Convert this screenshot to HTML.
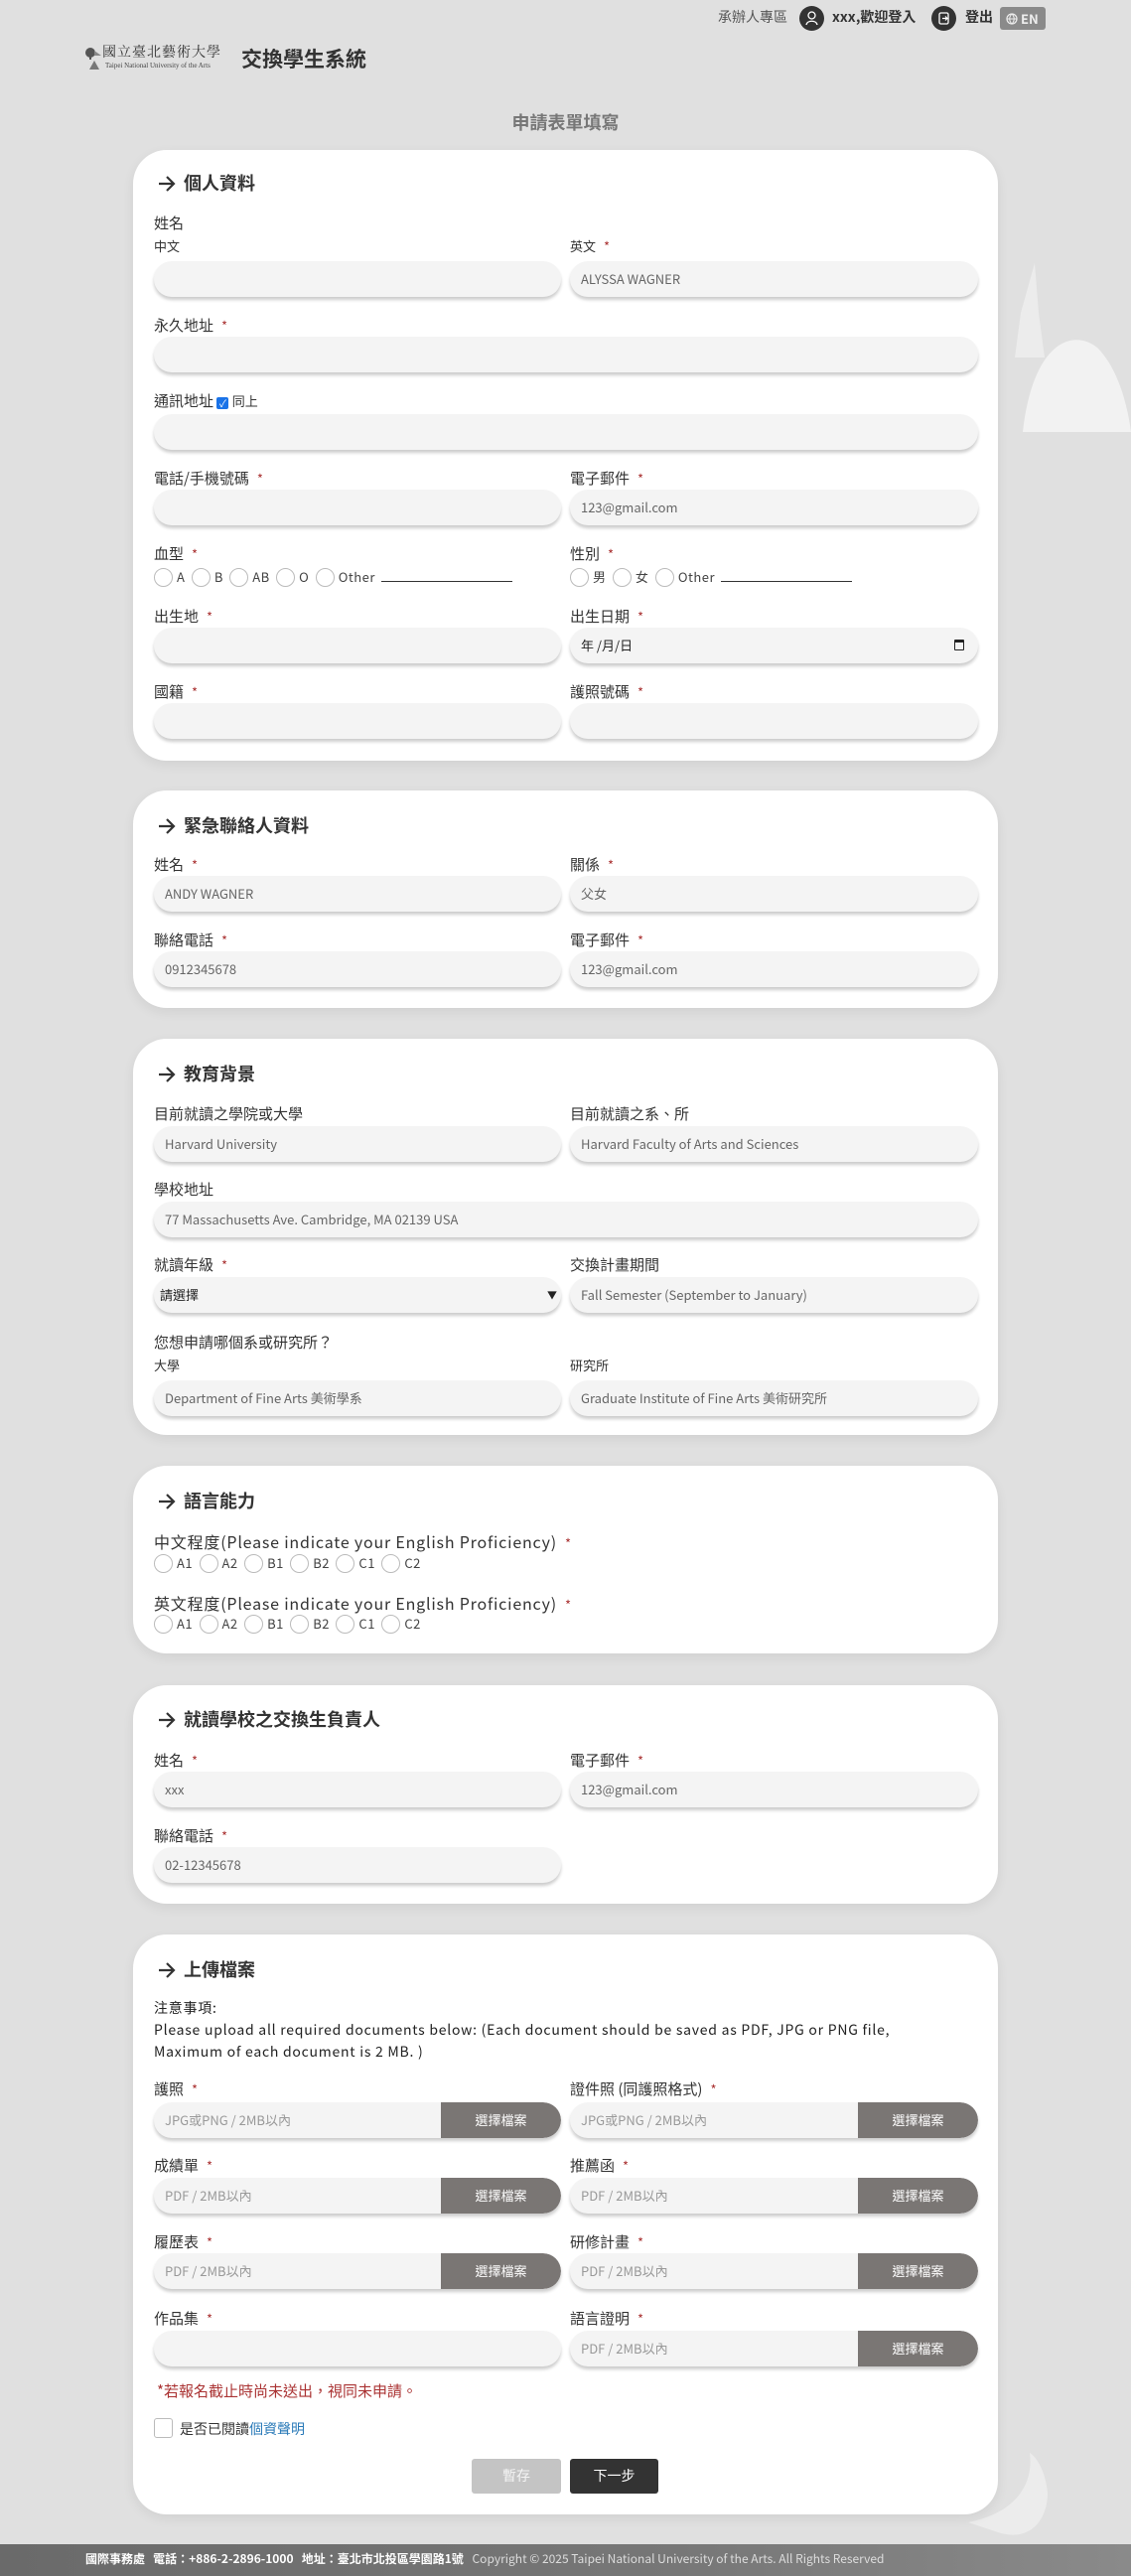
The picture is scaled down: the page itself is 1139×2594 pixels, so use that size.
<!DOCTYPE html>
<html><head><meta charset="utf-8">
<style>
*{box-sizing:border-box;margin:0;padding:0}
body{width:1139px;height:2594px;background:#e0e0e0;font-family:"Noto Sans CJK TC","Liberation Sans",sans-serif;color:#333;position:relative;overflow:hidden}
.a{position:absolute}
.card{position:absolute;left:134px;width:871px;background:#fff;border-radius:34px;box-shadow:0 4px 12px rgba(0,0,0,.07)}
.l{position:absolute;font-size:15px;line-height:20px;color:#333;white-space:nowrap}
.s{position:absolute;font-size:13px;line-height:18px;color:#333;white-space:nowrap}
.r{color:#a33;margin-left:8px;font-size:13px}
.in{position:absolute;height:36px;border-radius:18px;background:#f4f4f4;box-shadow:0 3px 3px rgba(0,0,0,.2);font-size:13px;line-height:36px;padding-left:11px;color:#666;white-space:nowrap;overflow:hidden}
.L{left:155px;width:410px}.R{left:574px;width:411px}.F{left:155px;width:830px}
.h{position:absolute;left:159px;font-size:18px;font-weight:bold;line-height:24px;color:#333;white-space:nowrap}
.h svg{vertical-align:-2px;margin-right:8px}
.btn{position:absolute;right:0;top:0;width:121px;height:36px;background:#7a7674;color:#fff;text-align:center;font-size:13px;border-radius:0 18px 18px 0}
.rad{position:absolute;font-size:13px;line-height:20px;color:#444;white-space:nowrap;letter-spacing:.5px}
.rad i{display:inline-block;width:19px;height:19px;border:1px solid #bbb;border-radius:50%;vertical-align:-5px;margin-right:4px;margin-left:3px}
.rad i:first-child{margin-left:0}
.line{display:inline-block;width:132px;border-bottom:1px solid #333;margin-left:6px;height:14px}
</style></head><body>

<!-- decorations -->
<svg class="a" style="left:1010px;top:265px" width="129" height="175"><path d="M32 0 L36 50 L42 95 L12 95 L18 50 Z" fill="#ececec"/><path d="M20 170 C30 80 70 65 95 85 C115 105 125 140 129 170 Z" fill="#f2f2f2"/></svg>
<svg class="a" style="left:975px;top:2470px" width="100" height="90"><path d="M30 80 C60 90 80 70 80 40 C78 20 70 5 62 0 C66 30 50 60 0 70 Z" fill="#ececec"/></svg>

<!-- top bar -->
<div class="a" style="left:723px;top:7px;font-size:14px;line-height:20px;color:#555">承辦人專區</div>
<div class="a" style="left:805px;top:6px;width:25px;height:25px;border-radius:50%;background:#333"><svg width="25" height="25"><circle cx="12.5" cy="9.5" r="3.5" fill="none" stroke="#fff" stroke-width="1.3"/><path d="M7 19 C8 14 17 14 18 19" fill="none" stroke="#fff" stroke-width="1.3"/></svg></div>
<div class="a" style="left:838px;top:7px;font-size:14px;line-height:20px;font-weight:bold;color:#333">xxx,歡迎登入</div>
<div class="a" style="left:938px;top:6px;width:25px;height:25px;border-radius:50%;background:#333"><svg width="25" height="25"><rect x="8" y="7" width="9" height="11" rx="1.5" fill="none" stroke="#fff" stroke-width="1.3"/><path d="M11 12.5 H16 M14 10.5 L16 12.5 L14 14.5" fill="none" stroke="#fff" stroke-width="1.2"/></svg></div>
<div class="a" style="left:972px;top:7px;font-size:14px;line-height:20px;font-weight:bold;color:#333">登出</div>
<div class="a" style="left:1007px;top:7px;width:46px;height:23px;background:#8a8a8a;border-radius:3px;color:#eee;font-size:13px;line-height:23px;font-weight:bold;padding-left:6px"><svg width="12" height="12" style="vertical-align:-1px"><circle cx="6" cy="6" r="5" fill="none" stroke="#eee" stroke-width="1.2"/><path d="M1 6H11M6 1C3 4 3 8 6 11M6 1C9 4 9 8 6 11" fill="none" stroke="#eee" stroke-width="1"/></svg> EN</div>

<!-- logo -->
<svg class="a" style="left:85px;top:47px" width="18" height="24"><circle cx="6" cy="6" r="5" fill="#555"/><path d="M6 10V13" stroke="#555" stroke-width="2"/><path d="M10 4 L17 9 L10 9Z" fill="#888"/><path d="M5 23 L10 14 L15 23Z" fill="#777"/></svg>
<div class="a" style="left:103px;top:44px;font-family:'Noto Serif CJK SC',serif;font-size:14px;line-height:16px;color:#333;letter-spacing:1px">國立臺北藝術大學</div>
<div class="a" style="left:106px;top:62px;font-family:'Liberation Serif',serif;font-size:7px;line-height:9px;color:#444">Taipei National University of the Arts</div>
<div class="a" style="left:243px;top:44px;font-size:21px;line-height:30px;font-weight:bold;color:#333">交換學生系統</div>

<div class="a" style="left:0;width:1139px;top:110px;text-align:center;font-size:18px;line-height:26px;font-weight:bold;color:#777">申請表單填寫</div>

<!-- card 1 -->
<div class="card" style="top:151px;height:615px"></div>
<div class="h" style="top:172px"><svg width="18" height="16"><path d="M1 8H16M9 1L16 8L9 15" fill="none" stroke="#333" stroke-width="2.2"/></svg>個人資料</div>
<div class="l" style="left:155px;top:215px">姓名</div>
<div class="s" style="left:155px;top:239px">中文</div>
<div class="s" style="left:574px;top:239px">英文<span class="r">*</span></div>
<div class="in L" style="top:263px"></div>
<div class="in R" style="top:263px">ALYSSA WAGNER</div>
<div class="l" style="left:155px;top:318px">永久地址<span class="r">*</span></div>
<div class="in F" style="top:339px"></div>
<div class="l" style="left:155px;top:394px">通訊地址 <span style="display:inline-block;width:12px;height:12px;background:#1a73e8;border-radius:2px;vertical-align:-1px;color:#fff;font-size:10px;line-height:12px;text-align:center">✓</span> <span style="font-size:13px">同上</span></div>
<div class="in F" style="top:417px"></div>
<div class="l" style="left:155px;top:472px">電話/手機號碼<span class="r">*</span></div>
<div class="l" style="left:574px;top:472px">電子郵件<span class="r">*</span></div>
<div class="in L" style="top:493px"></div>
<div class="in R" style="top:493px">123@gmail.com</div>
<div class="l" style="left:155px;top:548px">血型<span class="r">*</span></div>
<div class="l" style="left:574px;top:548px">性別<span class="r">*</span></div>
<div class="rad" style="left:155px;top:571px"><i></i>A <i></i>B <i></i>AB <i></i>O <i></i>Other<span class="line"></span></div>
<div class="rad" style="left:574px;top:571px"><i></i>男 <i></i>女 <i></i>Other<span class="line"></span></div>
<div class="l" style="left:155px;top:611px">出生地<span class="r">*</span></div>
<div class="l" style="left:574px;top:611px">出生日期<span class="r">*</span></div>
<div class="in L" style="top:632px"></div>
<div class="in R" style="top:632px;color:#222">年 /月/日<span style="position:absolute;right:14px;top:12px;width:10px;height:11px;border:1.5px solid #222;border-top-width:3px;border-radius:1px"></span></div>
<div class="l" style="left:155px;top:687px">國籍<span class="r">*</span></div>
<div class="l" style="left:574px;top:687px">護照號碼<span class="r">*</span></div>
<div class="in L" style="top:708px"></div>
<div class="in R" style="top:708px"></div>

<!-- card 2 -->
<div class="card" style="top:796px;height:219px"></div>
<div class="h" style="top:819px"><svg width="18" height="16"><path d="M1 8H16M9 1L16 8L9 15" fill="none" stroke="#333" stroke-width="2.2"/></svg>緊急聯絡人資料</div>
<div class="l" style="left:155px;top:861px">姓名<span class="r">*</span></div>
<div class="l" style="left:574px;top:861px">關係<span class="r">*</span></div>
<div class="in L" style="top:882px">ANDY WAGNER</div>
<div class="in R" style="top:882px">父女</div>
<div class="l" style="left:155px;top:937px">聯絡電話<span class="r">*</span></div>
<div class="l" style="left:574px;top:937px">電子郵件<span class="r">*</span></div>
<div class="in L" style="top:958px">0912345678</div>
<div class="in R" style="top:958px">123@gmail.com</div>

<!-- card 3 -->
<div class="card" style="top:1046px;height:399px"></div>
<div class="h" style="top:1069px"><svg width="18" height="16"><path d="M1 8H16M9 1L16 8L9 15" fill="none" stroke="#333" stroke-width="2.2"/></svg>教育背景</div>
<div class="l" style="left:155px;top:1112px">目前就讀之學院或大學</div>
<div class="l" style="left:574px;top:1112px">目前就讀之系、所</div>
<div class="in L" style="top:1134px">Harvard University</div>
<div class="in R" style="top:1134px">Harvard Faculty of Arts and Sciences</div>
<div class="l" style="left:155px;top:1188px">學校地址</div>
<div class="in F" style="top:1210px">77 Massachusetts Ave. Cambridge, MA 02139 USA</div>
<div class="l" style="left:155px;top:1264px">就讀年級<span class="r">*</span></div>
<div class="l" style="left:574px;top:1264px">交換計畫期間</div>
<div class="in L" style="top:1286px;color:#222;padding-left:6px">請選擇<span style="position:absolute;right:4px;font-size:10px">▼</span></div>
<div class="in R" style="top:1286px">Fall Semester (September to January)</div>
<div class="l" style="left:155px;top:1342px">您想申請哪個系或研究所？</div>
<div class="s" style="left:155px;top:1366px">大學</div>
<div class="s" style="left:574px;top:1366px">研究所</div>
<div class="in L" style="top:1390px">Department of Fine Arts 美術學系</div>
<div class="in R" style="top:1390px">Graduate Institute of Fine Arts 美術研究所</div>

<!-- card 4 -->
<div class="card" style="top:1476px;height:189px"></div>
<div class="h" style="top:1499px"><svg width="18" height="16"><path d="M1 8H16M9 1L16 8L9 15" fill="none" stroke="#333" stroke-width="2.2"/></svg>語言能力</div>
<div class="l" style="left:155px;top:1542px;font-size:16px;letter-spacing:.8px">中文程度(Please indicate your English Proficiency)<span class="r">*</span></div>
<div class="rad" style="left:155px;top:1564px"><i></i>A1 <i></i>A2 <i></i>B1 <i></i>B2 <i></i>C1 <i></i>C2</div>
<div class="l" style="left:155px;top:1604px;font-size:16px;letter-spacing:.8px">英文程度(Please indicate your English Proficiency)<span class="r">*</span></div>
<div class="rad" style="left:155px;top:1625px"><i></i>A1 <i></i>A2 <i></i>B1 <i></i>B2 <i></i>C1 <i></i>C2</div>

<!-- card 5 -->
<div class="card" style="top:1697px;height:220px"></div>
<div class="h" style="top:1719px"><svg width="18" height="16"><path d="M1 8H16M9 1L16 8L9 15" fill="none" stroke="#333" stroke-width="2.2"/></svg>就讀學校之交換生負責人</div>
<div class="l" style="left:155px;top:1763px">姓名<span class="r">*</span></div>
<div class="l" style="left:574px;top:1763px">電子郵件<span class="r">*</span></div>
<div class="in L" style="top:1784px">xxx</div>
<div class="in R" style="top:1784px">123@gmail.com</div>
<div class="l" style="left:155px;top:1839px">聯絡電話<span class="r">*</span></div>
<div class="in L" style="top:1860px">02-12345678</div>

<!-- card 6 -->
<div class="card" style="top:1948px;height:584px"></div>
<div class="h" style="top:1971px"><svg width="18" height="16"><path d="M1 8H16M9 1L16 8L9 15" fill="none" stroke="#333" stroke-width="2.2"/></svg>上傳檔案</div>
<div class="a" style="left:155px;top:2011px;font-size:14px;line-height:22px;color:#222;letter-spacing:.75px">注意事項:<br>Please upload all required documents below: (Each document should be saved as PDF, JPG or PNG file,<br>Maximum of each document is 2 MB. )</div>
<div class="l" style="left:155px;top:2094px">護照<span class="r">*</span></div>
<div class="l" style="left:574px;top:2094px">證件照 (同護照格式)<span class="r">*</span></div>
<div class="in L" style="top:2117px;color:#999">JPG或PNG / 2MB以內<div class="btn">選擇檔案</div></div>
<div class="in R" style="top:2117px;color:#999">JPG或PNG / 2MB以內<div class="btn">選擇檔案</div></div>
<div class="l" style="left:155px;top:2171px">成績單<span class="r">*</span></div>
<div class="l" style="left:574px;top:2171px">推薦函<span class="r">*</span></div>
<div class="in L" style="top:2193px;color:#999">PDF / 2MB以內<div class="btn">選擇檔案</div></div>
<div class="in R" style="top:2193px;color:#999">PDF / 2MB以內<div class="btn">選擇檔案</div></div>
<div class="l" style="left:155px;top:2248px">履歷表<span class="r">*</span></div>
<div class="l" style="left:574px;top:2248px">研修計畫<span class="r">*</span></div>
<div class="in L" style="top:2269px;color:#999">PDF / 2MB以內<div class="btn">選擇檔案</div></div>
<div class="in R" style="top:2269px;color:#999">PDF / 2MB以內<div class="btn">選擇檔案</div></div>
<div class="l" style="left:155px;top:2325px">作品集<span class="r">*</span></div>
<div class="l" style="left:574px;top:2325px">語言證明<span class="r">*</span></div>
<div class="in L" style="top:2347px"></div>
<div class="in R" style="top:2347px;color:#999">PDF / 2MB以內<div class="btn">選擇檔案</div></div>
<div class="l" style="left:158px;top:2398px;color:#a33">*若報名截止時尚未送出，視同未申請。</div>
<div class="a" style="left:155px;top:2435px;width:19px;height:20px;border:1px solid #bbb;border-radius:3px"></div>
<div class="l" style="left:181px;top:2436px;font-size:14px">是否已閱讀<span style="color:#2a7ab8">個資聲明</span></div>
<div class="a" style="left:475px;top:2476px;width:90px;height:35px;background:#c4c4c4;color:#f4f4f4;border-radius:3px;text-align:center;line-height:35px;font-size:14px">暫存</div>
<div class="a" style="left:574px;top:2476px;width:89px;height:35px;background:#333;color:#fff;border-radius:3px;text-align:center;line-height:35px;font-size:14px">下一步</div>

<!-- footer -->
<div class="a" style="left:0;top:2562px;width:1139px;height:32px;background:linear-gradient(90deg,#6a6a6a,#777 60%,#8a8a8a)"></div>
<div class="a" style="left:86px;top:2568px;font-size:12px;line-height:18px;color:#fff;font-weight:bold;white-space:nowrap">國際事務處 &nbsp; 電話：+886-2-2896-1000 &nbsp; 地址：臺北市北投區學園路1號 <span style="font-weight:normal;color:#ddd;font-size:12px;margin-left:6px">Copyright © 2025 Taipei National University of the Arts. All Rights Reserved</span></div>
</body></html>
